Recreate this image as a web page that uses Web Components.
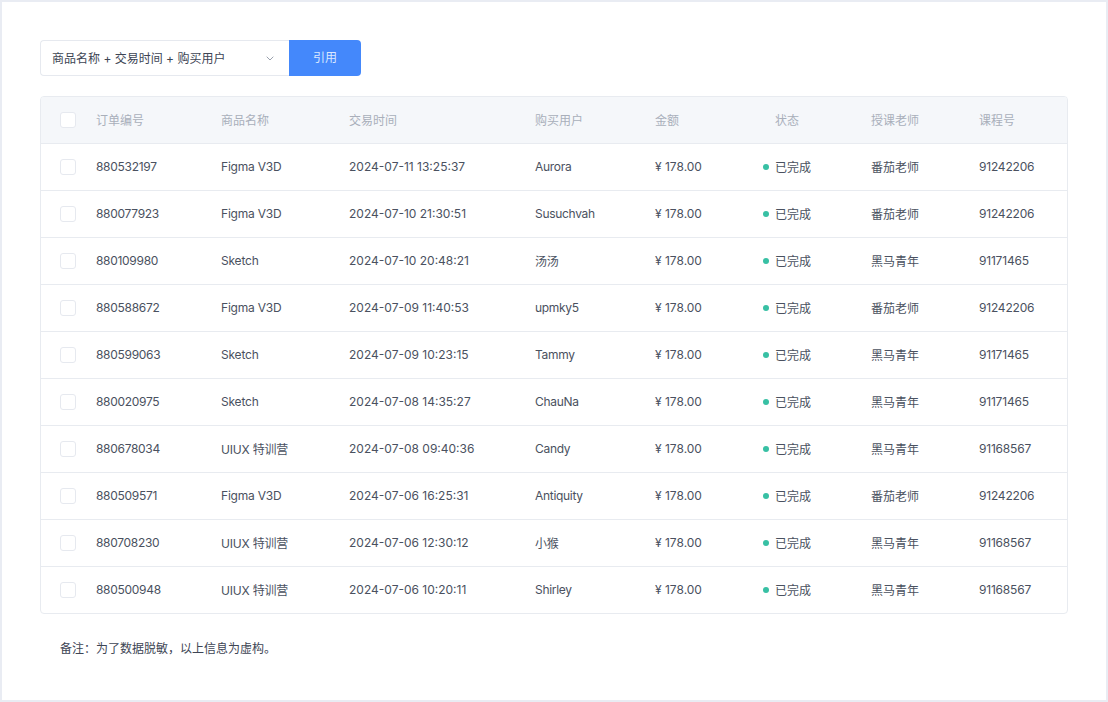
<!DOCTYPE html>
<html lang="zh">
<head>
<meta charset="utf-8">
<title>订单</title>
<style>
html, body { margin: 0; padding: 0; background: #fff; }
body { font-family: "Inter", "Noto Sans CJK SC", sans-serif; }
</style>
</head>
<body>
<order-page>
    <order-toolbar slot="toolbar" label="商品名称 + 交易时间 + 购买用户" action="引用"></order-toolbar>
    <order-table></order-table>
    <span slot="note">备注：为了数据脱敏，以上信息为虚构。</span>
</order-page>

<script>
const FIGMA = ['Figma V3D', '番茄老师', '91242206'];
const SKETCH = ['Sketch', '黑马青年', '91171465'];
const UIUX = ['UIUX 特训营', '黑马青年', '91168567'];

const ORDERS = [
    ['880532197', FIGMA, '2024-07-11 13:25:37', 'Aurora'],
    ['880077923', FIGMA, '2024-07-10 21:30:51', 'Susuchvah'],
    ['880109980', SKETCH, '2024-07-10 20:48:21', '汤汤'],
    ['880588672', FIGMA, '2024-07-09 11:40:53', 'upmky5'],
    ['880599063', SKETCH, '2024-07-09 10:23:15', 'Tammy'],
    ['880020975', SKETCH, '2024-07-08 14:35:27', 'ChauNa'],
    ['880678034', UIUX, '2024-07-08 09:40:36', 'Candy'],
    ['880509571', FIGMA, '2024-07-06 16:25:31', 'Antiquity'],
    ['880708230', UIUX, '2024-07-06 12:30:12', '小猴'],
    ['880500948', UIUX, '2024-07-06 10:20:11', 'Shirley']
];

class OrderPage extends HTMLElement {
    constructor() {
        super();
        this.attachShadow({ mode: 'open' }).innerHTML = `
        <style>
        :host {
            display: block;
            box-sizing: border-box;
            width: 1108px;
            height: 702px;
            padding: 38px 38px 0;
            border: 2px solid #e9ecf3;
            background: #fff;
            overflow: hidden;
        }
        .note {
            margin: 27px 0 0 20px;
            font-size: 12px;
            line-height: 16px;
            color: #3d4554;
        }
        </style>
        <slot name="toolbar"></slot>
        <slot></slot>
        <div class="note"><slot name="note"></slot></div>
        `;
    }
}
customElements.define('order-page', OrderPage);

class OrderToolbar extends HTMLElement {
    constructor() {
        super();
        this.attachShadow({ mode: 'open' }).innerHTML = `
        <style>
        :host {
            display: flex;
            height: 36px;
            margin-bottom: 20px;
            font-size: 12px;
        }
        .select {
            box-sizing: border-box;
            width: 249px;
            display: flex;
            align-items: center;
            justify-content: space-between;
            padding: 0 15px 0 11px;
            border: 1px solid #e6e9ef;
            border-right: 0;
            border-radius: 4px 0 0 4px;
            color: #3d4554;
        }
        .select span { margin-bottom: 2px; }
        svg { display: block; }
        button {
            width: 72px;
            border: 0;
            padding: 0 0 3px;
            border-radius: 0 4px 4px 0;
            background: #4488fb;
            color: #dbe8ff;
            font: inherit;
        }
        </style>
        <div class="select">
            <span>${this.getAttribute('label')}</span>
            <svg width="8" height="5" viewBox="0 0 8 5" fill="none" stroke="#9aa1ad" stroke-width="1"><path d="M.7.7l3.300 3.300L7.300.7"/></svg>
        </div>
        <button type="button">${this.getAttribute('action')}</button>
        `;
    }
}
customElements.define('order-toolbar', OrderToolbar);

class OrderCheck extends HTMLElement {
    constructor() {
        super();
        this.attachShadow({ mode: 'open' }).innerHTML = `
        <style>
        :host {
            display: block;
            box-sizing: border-box;
            width: 16px;
            height: 16px;
            border: 1px solid #e6e9ef;
            border-radius: 3px;
            background: #fff;
        }
        </style>
        `;
    }
}
customElements.define('order-check', OrderCheck);

class OrderRow extends HTMLElement {
    constructor() {
        super();
        this.attachShadow({ mode: 'open' }).innerHTML = `
        <style>
        :host {
            display: grid;
            grid-template-columns: 55px 125px 128px 186px 120px 108px 108px 108px 1fr;
            align-items: center;
            height: 46px;
            border-top: 1px solid #e8ebf0;
            font-size: 12px;
            color: #4a5160;
        }
        :host([head]) {
            border-top: 0;
            background: #f5f7fa;
            color: #a9afba;
        }
        .check { padding-left: 19px; }
        .cell { margin-bottom: 2px; }
        .tight { letter-spacing: -.3px; }
        .course { letter-spacing: -.2px; }
        :host([head]) .tight, :host([head]) .course { letter-spacing: 0; }
        .status {
            display: flex;
            align-items: center;
        }
        .dot {
            width: 6px;
            height: 6px;
            margin: 2px 6px 0 0;
            border-radius: 50%;
            background: #38c0a4;
        }
        :host([head]) .dot { background: transparent; }
        </style>
        <div class="check"><order-check></order-check></div>
        <div class="cell tight"><slot name="id"></slot></div>
        <div class="cell course"><slot name="product"></slot></div>
        <div class="cell"><slot name="time"></slot></div>
        <div class="cell tight"><slot name="user"></slot></div>
        <div class="cell"><slot name="amount"></slot></div>
        <div class="cell status"><span class="dot"></span><slot name="status"></slot></div>
        <div class="cell"><slot name="teacher"></slot></div>
        <div class="cell course"><slot name="course"></slot></div>
        `;
    }
}
customElements.define('order-row', OrderRow);

class OrderTable extends HTMLElement {
    constructor() {
        super();
        const shadow = this.attachShadow({ mode: 'open' });
        shadow.innerHTML = `
        <style>
        :host {
            display: block;
            border: 1px solid #e8ebf0;
            border-radius: 4px;
            overflow: hidden;
        }
        </style>
        `;
        shadow.appendChild(this.makeRow({
            id: '订单编号', user: '购买用户', product: '商品名称', time: '交易时间',
            amount: '金额', status: '状态', teacher: '授课老师', course: '课程号'
        }, true));
        ORDERS.forEach(order => {
            shadow.appendChild(this.makeRow({
                id: order[0], product: order[1][0], time: order[2], user: order[3],
                amount: '¥ 178.00', status: '已完成', teacher: order[1][1], course: order[1][2]
            }, false));
        });
    }
    makeRow(cells, head) {
        const row = document.createElement('order-row');
        if (head) row.setAttribute('head', '');
        Object.keys(cells).forEach(name => {
            const span = document.createElement('span');
            span.slot = name;
            span.textContent = cells[name];
            row.appendChild(span);
        });
        return row;
    }
}
customElements.define('order-table', OrderTable);
</script>
</body>
</html>
